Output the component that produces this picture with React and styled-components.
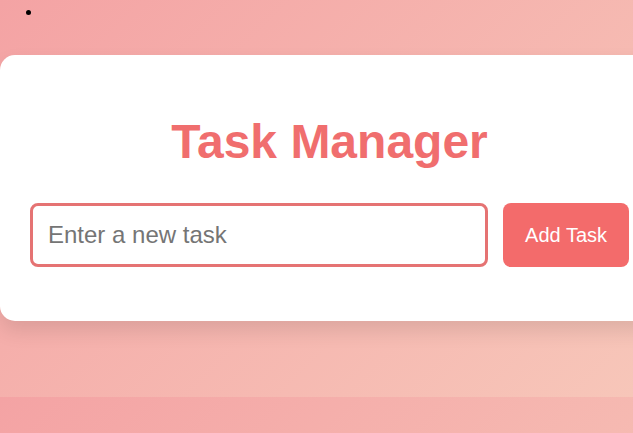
import React, { useState } from 'react';
import styled, { createGlobalStyle } from 'styled-components';

const GlobalStyle = createGlobalStyle`
  body {
    margin: 0;
    font-family: 'Liberation Sans', Arial, sans-serif;
    background: linear-gradient(135deg, #f4a3a4 0%, #f7c6b9 100%);
  }
`;

const Page = styled.div`
  padding-bottom: 76px;
`;

const TaskList = styled.ul`
  margin: 3px 0 0;
  padding-left: 42px;
  font-family: 'Liberation Serif', serif;
  font-size: 16px;
  line-height: 18px;
`;

const Card = styled.div`
  width: 599px;
  margin-top: 34px;
  padding: 30px 30px 54px;
  background: #ffffff;
  border-radius: 15px;
  box-shadow: 0 10px 20px rgba(0, 0, 0, 0.1);
`;

const Title = styled.h1`
  margin: 29px 0 34px;
  text-align: center;
  font-size: 48px;
  font-weight: bold;
  color: #f06e6e;
`;

const Row = styled.div`
  display: flex;
  gap: 15px;
`;

const TaskInput = styled.input`
  flex: 1;
  min-width: 0;
  padding: 15px;
  font-family: inherit;
  font-size: 24px;
  line-height: 28px;
  border: 3px solid #e57373;
  border-radius: 8px;
  outline: none;

  &::placeholder {
    color: #757575;
  }
`;

const AddButton = styled.button`
  padding: 0 22px;
  font-family: inherit;
  font-size: 20px;
  color: #ffffff;
  background: #f36b6b;
  border: none;
  border-radius: 8px;
  cursor: pointer;
`;

export default function App() {
  const [task, setTask] = useState('');

  return (
    <Page>
      <GlobalStyle />
      <TaskList>
        <li />
      </TaskList>
      <Card>
        <Title>Task Manager</Title>
        <Row>
          <TaskInput
            placeholder="Enter a new task"
            value={task}
            onChange={(e) => setTask(e.target.value)}
          />
          <AddButton>Add Task</AddButton>
        </Row>
      </Card>
    </Page>
  );
}
